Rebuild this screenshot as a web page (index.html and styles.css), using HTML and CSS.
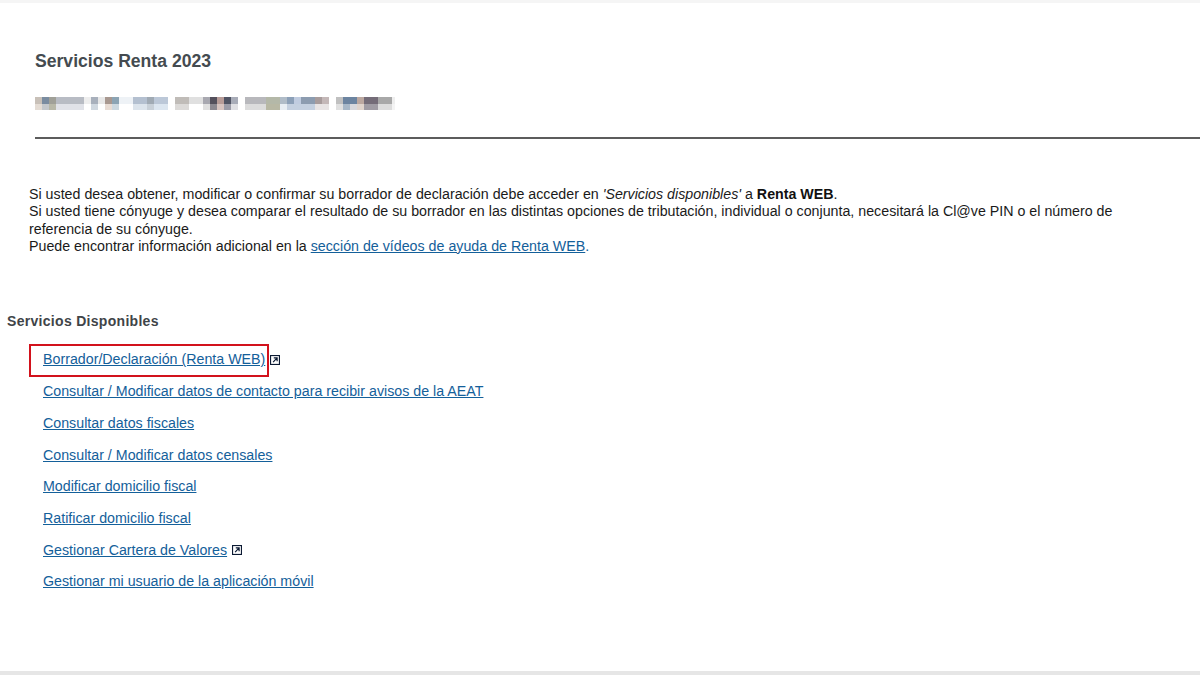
FILE: index.html
```html
<!DOCTYPE html>
<html lang="es">
<head>
<meta charset="utf-8">
<title>Servicios Renta 2023</title>
<link rel="stylesheet" href="styles.css">
</head>
<body>
<div class="page">
  <header class="head">
    <h1 class="title">Servicios Renta 2023</h1>
    <div class="redacted" aria-hidden="true"></div>
    <hr class="rule">
  </header>
  <section class="intro">
    Si usted desea obtener, modificar o confirmar su borrador de declaración debe acceder en <em>'Servicios disponibles'</em> a <strong>Renta WEB</strong>.<br>
    Si usted tiene cónyuge y desea comparar el resultado de su borrador en las distintas opciones de tributación, individual o conjunta, necesitará la Cl@ve PIN o el número de referencia de su cónyuge.<br>
    Puede encontrar información adicional en la <a href="#">sección de vídeos de ayuda de Renta WEB</a><span class="dot">.</span>
  </section>
  <section class="services">
    <h2 class="subtitle">Servicios Disponibles</h2>
    <ul class="links">
      <li class="highlighted"><a href="#">Borrador/Declaración (Renta WEB)</a>
        <svg class="ext" viewBox="0 0 9 9" aria-hidden="true"><rect x=".5" y=".5" width="8" height="8" fill="#fff" stroke="#0c1a33"/><path d="M2.8 6.4 6 3.1M3.4 2.6h3v3" fill="none" stroke="#0c1a33" stroke-width="1.1"/></svg>
      </li>
      <li><a href="#">Consultar / Modificar datos de contacto para recibir avisos de la AEAT</a></li>
      <li><a href="#">Consultar datos fiscales</a></li>
      <li><a href="#">Consultar / Modificar datos censales</a></li>
      <li><a href="#">Modificar domicilio fiscal</a></li>
      <li><a href="#">Ratificar domicilio fiscal</a></li>
      <li><a href="#">Gestionar Cartera de Valores</a>
        <svg class="ext" viewBox="0 0 9 9" aria-hidden="true"><rect x=".5" y=".5" width="8" height="8" fill="#fff" stroke="#0c1a33"/><path d="M2.8 6.4 6 3.1M3.4 2.6h3v3" fill="none" stroke="#0c1a33" stroke-width="1.1"/></svg>
      </li>
      <li><a href="#">Gestionar mi usuario de la aplicación móvil</a></li>
    </ul>
  </section>
</div>
</body>
</html>
```
FILE: styles.css
```css
* { box-sizing: border-box; }
html, body { margin: 0; padding: 0; }
body {
  width: 1200px;
  height: 675px;
  overflow: hidden;
  background: #fff;
  font-family: "Liberation Sans", Arial, sans-serif;
  color: #1a1a1a;
}
.page {
  height: 675px;
  border-top: 3px solid #f5f5f5;
  border-bottom: 4px solid #e6e6e6;
  overflow: hidden;
}
.head { padding: 48px 0 0 35px; }
.title {
  margin: 0;
  font-size: 17.6px;
  line-height: 21px;
  font-weight: 700;
  color: #444b50;
}
.redacted {
  width: 360px;
  height: 13px;
  margin-top: 25px;
  filter: blur(.5px);
  background-color: #fff;
  background-repeat: no-repeat;
  background-size: 100% 7px, 100% 6px;
  background-position: 0 0, 0 7px;
  background-image:
    linear-gradient(90deg,
      #c8c0b8 0 7px, #7a8ca0 7px 14px, #a0a098 14px 21px, #b8bcc4 21px 49px, #eee 49px 56px,
      #a8b0bc 56px 63px, #e8e8e8 63px 70px, #a89890 70px 77px, #8ca4b4 77px 84px, #eef2f6 84px 98px,
      #b4c0d0 98px 112px, #a0aab4 112px 119px, #bcc8d8 119px 133px, #fff 133px 140px, #c0bcb8 140px 154px,
      #e0e0e0 154px 168px, #a8a8b0 168px 175px, #54505c 175px 182px, #b89c98 182px 189px, #505464 189px 196px,
      #a8acb8 196px 203px, #fff 203px 210px, #b8b8bc 210px 231px, #b4b8a8 231px 245px, #b0bcc8 245px 252px,
      #8ca0b8 252px 259px, #c0cce0 259px 266px, #8c9cb0 266px 280px, #a89c9c 280px 287px, #c4b8b8 287px 294px,
      #fff 294px 301px, #c0c0c0 301px 308px, #6c84a0 308px 322px, #bca8a0 322px 329px, #746c78 329px 343px,
      #a8a8a8 343px 357px, #eee 357px 360px),
    linear-gradient(90deg,
      #e4dcd4 0 7px, #c4c8cc 7px 14px, #b8b8a8 14px 21px, #e0e2e8 21px 49px, #fff 49px 56px,
      #d0d8e0 56px 63px, #fff 63px 70px, #e8dcd4 70px 77px, #ccd8e0 77px 84px, #fff 84px 98px,
      #dce4ec 98px 112px, #c8d0d8 112px 119px, #dce6f0 119px 133px, #fff 133px 140px, #dcdad8 140px 154px,
      #fff 154px 168px, #e0e0e0 168px 175px, #8c8890 175px 182px, #d8c4c0 182px 189px, #9c9ca8 189px 196px,
      #e0e0e4 196px 203px, #fff 203px 210px, #dcdcdc 210px 231px, #b8b8a4 231px 245px, #e8eef4 245px 252px,
      #c4d0e0 252px 280px, #e8e4e4 280px 294px, #fff 294px 301px, #e0e0e0 301px 308px, #a8b8c8 308px 315px,
      #d8d8dc 315px 322px, #e0d4cc 322px 329px, #a09ca4 329px 343px, #dcdcdc 343px 357px, #f4f4f4 357px 360px);
}
.rule {
  height: 2px;
  margin: 27px 0 0;
  border: 0;
  background: #5c5c5c;
}
.intro {
  margin: 47px 0 0 29px;
  width: 1100px;
  font-size: 14.24px;
  line-height: 17.3px;
  color: #1a1a1a;
}
.intro strong { color: #111; }
.intro a, .links a { color: #14609a; text-decoration: underline; }
.dot { color: #14609a; }
.services { margin-top: 58px; padding-left: 7px; }
.subtitle {
  margin: 0;
  font-size: 14px;
  line-height: 17px;
  font-weight: 700;
  letter-spacing: .3px;
  color: #3f4448;
}
.links {
  list-style: none;
  margin: 20.7px 0 0;
  padding: 0 0 0 36px;
  font-size: 14.24px;
}
.links li {
  position: relative;
  display: flex;
  align-items: center;
  gap: 5px;
  height: 17px;
  margin-bottom: 14.72px;
}
.ext { display: block; width: 10px; height: 10px; flex: none; margin-top: 1px; }
.highlighted::before {
  content: "";
  box-sizing: border-box;
  position: absolute;
  left: -14px;
  top: -6.7px;
  width: 240px;
  height: 33px;
  border: 2px solid #d2121c;
  pointer-events: none;
}
```
